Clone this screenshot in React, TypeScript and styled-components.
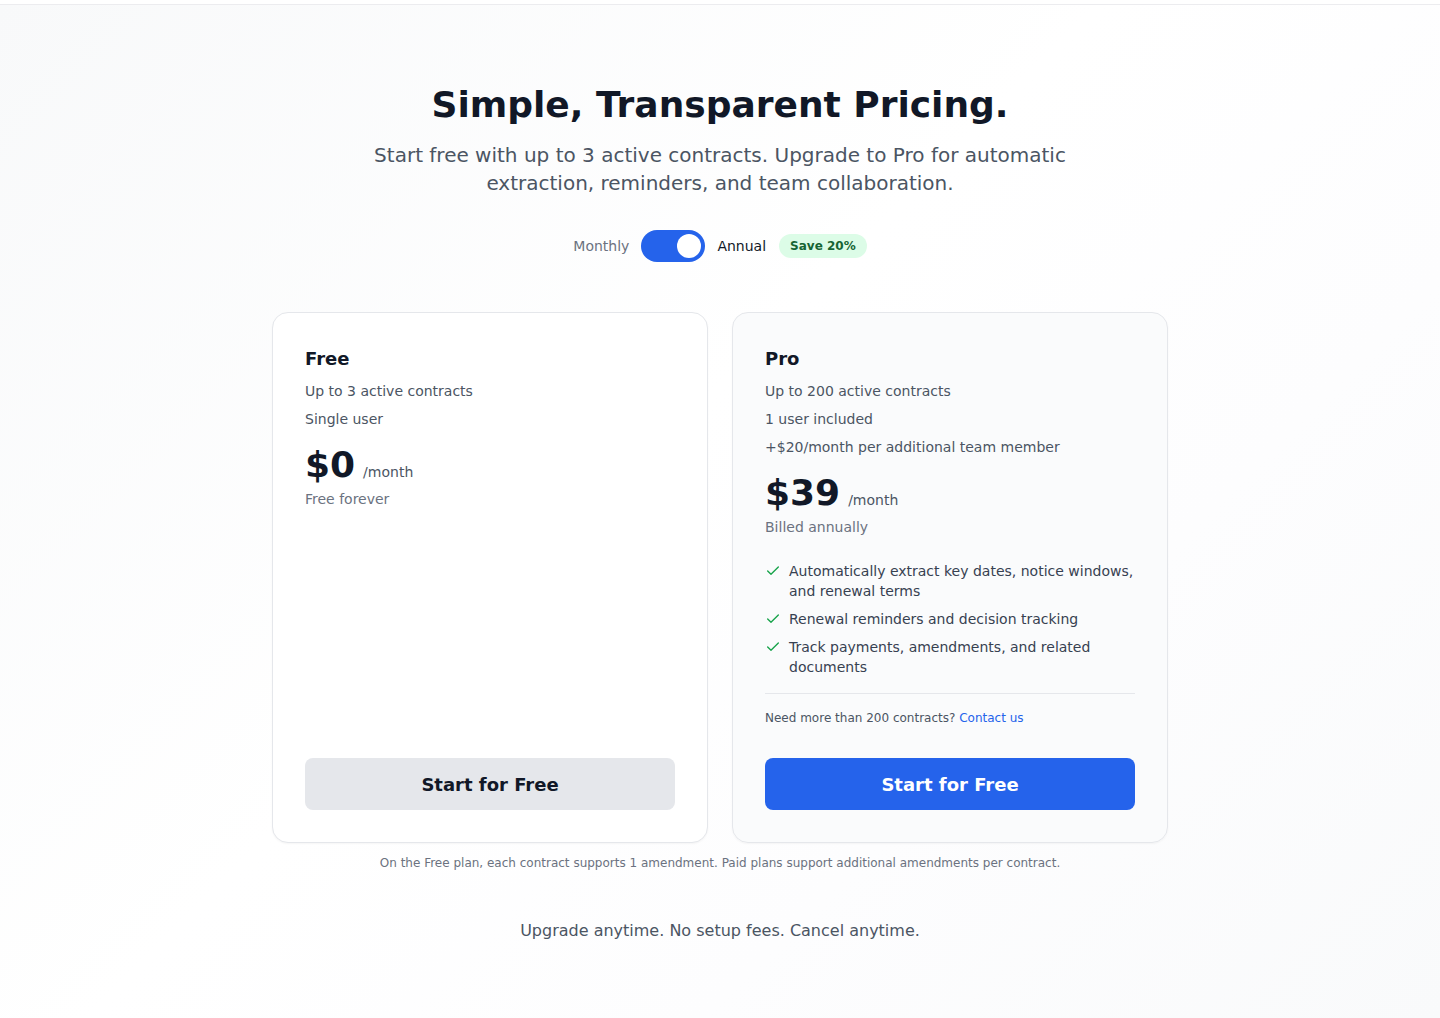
import React, { useState } from 'react';
import styled, { createGlobalStyle } from 'styled-components';

const GlobalStyle = createGlobalStyle`
  * { box-sizing: border-box; }
  html, body {
    margin: 0;
    padding: 0;
    font-family: "DejaVu Sans", "Noto Sans", sans-serif;
    color: #111827;
  }
`;

const Page = styled.div`
  min-height: 1018px;
  background: linear-gradient(135deg, #f8f9fa 0%, #ffffff 45%, #fdfdfe 70%, #f9fafb 100%);
`;

const TopBar = styled.div`
  height: 5px;
  background: #ffffff;
  border-bottom: 1px solid #ececef;
`;

const Main = styled.main`
  max-width: 896px;
  margin: 0 auto;
  padding: 80px 0 60px;
  display: flex;
  flex-direction: column;
  align-items: center;
`;

const Title = styled.h1`
  margin: 0;
  font-size: 36px;
  line-height: 40px;
  font-weight: 700;
  color: #111827;
  text-align: center;
`;

const Subtitle = styled.p`
  margin: 16px 0 0;
  max-width: 700px;
  font-size: 20px;
  line-height: 28px;
  color: #4b5563;
  text-align: center;
`;

const ToggleRow = styled.div`
  margin-top: 33px;
  display: flex;
  align-items: center;
  gap: 12px;
`;

const ToggleLabel = styled.span<{ $active?: boolean }>`
  font-size: 14px;
  line-height: 20px;
  color: ${(p) => (p.$active ? '#111827' : '#6b7280')};
`;

const Switch = styled.button<{ $on: boolean }>`
  position: relative;
  width: 64px;
  height: 32px;
  border: none;
  border-radius: 999px;
  padding: 0;
  cursor: pointer;
  background: ${(p) => (p.$on ? '#2563eb' : '#d1d5db')};
`;

const Knob = styled.span<{ $on: boolean }>`
  position: absolute;
  top: 4px;
  left: ${(p) => (p.$on ? '36px' : '4px')};
  width: 24px;
  height: 24px;
  border-radius: 50%;
  background: #ffffff;
  transition: left 0.2s;
`;

const Badge = styled.span`
  margin-left: 1px;
  padding: 4px 11px;
  border-radius: 999px;
  background: #dcfce7;
  color: #166534;
  font-size: 12px;
  line-height: 16px;
  font-weight: 700;
`;

const Cards = styled.div`
  margin-top: 50px;
  width: 100%;
  display: grid;
  grid-template-columns: 1fr 1fr;
  gap: 24px;
`;

const Card = styled.div<{ $tint?: boolean }>`
  display: flex;
  flex-direction: column;
  min-height: 531px;
  padding: 32px;
  border: 1px solid #e5e7eb;
  border-radius: 16px;
  background: ${(p) => (p.$tint ? 'rgba(250, 251, 252, 0.9)' : '#ffffff')};
  box-shadow: 0 1px 2px rgba(0, 0, 0, 0.04);
`;

const PlanName = styled.h2`
  margin: 0;
  font-size: 18px;
  line-height: 28px;
  font-weight: 700;
  color: #111827;
`;

const PlanLine = styled.p`
  margin: 8px 0 0;
  font-size: 14px;
  line-height: 20px;
  color: #4b5563;
`;

const PriceRow = styled.div`
  margin-top: 16px;
  display: flex;
  align-items: baseline;
  gap: 8px;
`;

const Price = styled.span`
  font-size: 36px;
  line-height: 40px;
  font-weight: 700;
  color: #111827;
`;

const Per = styled.span`
  font-size: 14px;
  color: #4b5563;
`;

const PriceNote = styled.p`
  margin: 4px 0 0;
  font-size: 14px;
  line-height: 20px;
  color: #6b7280;
`;

const Features = styled.ul`
  list-style: none;
  margin: 24px 0 0;
  padding: 0;
  display: flex;
  flex-direction: column;
  gap: 8px;
`;

const Feature = styled.li`
  display: flex;
  gap: 8px;
  font-size: 14px;
  line-height: 20px;
  color: #374151;
  svg {
    flex-shrink: 0;
    margin-top: 2px;
  }
`;

const MoreNote = styled.p`
  margin: 16px 0 0;
  padding-top: 16px;
  border-top: 1px solid #e5e7eb;
  font-size: 12px;
  line-height: 16px;
  color: #4b5563;
`;

const Link = styled.a`
  color: #2563eb;
  text-decoration: none;
`;

const CtaButton = styled.button<{ $primary?: boolean }>`
  margin-top: auto;
  width: 100%;
  height: 52px;
  border: none;
  border-radius: 8px;
  font-family: inherit;
  font-size: 18px;
  font-weight: 700;
  cursor: pointer;
  background: ${(p) => (p.$primary ? '#2563eb' : '#e5e7eb')};
  color: ${(p) => (p.$primary ? '#ffffff' : '#111827')};
`;

const Footnote = styled.p`
  margin: 12px 0 0;
  font-size: 12px;
  line-height: 16px;
  color: #6b7280;
  text-align: center;
`;

const Closing = styled.p`
  margin: 48px 0 0;
  font-size: 16px;
  line-height: 24px;
  color: #4b5563;
  text-align: center;
`;

const Check = () => (
  <svg width="16" height="16" viewBox="0 0 24 24" fill="none" stroke="#16a34a" strokeWidth="2" strokeLinecap="round" strokeLinejoin="round">
    <path d="M20 6 9 17l-5-5" />
  </svg>
);

const features = [
  'Automatically extract key dates, notice windows, and renewal terms',
  'Renewal reminders and decision tracking',
  'Track payments, amendments, and related documents',
];

const App: React.FC = () => {
  const [annual, setAnnual] = useState(true);

  return (
    <>
      <GlobalStyle />
      <Page>
        <TopBar />
        <Main>
          <Title>Simple, Transparent Pricing.</Title>
          <Subtitle>
            Start free with up to 3 active contracts. Upgrade to Pro for automatic extraction, reminders, and team collaboration.
          </Subtitle>

          <ToggleRow>
            <ToggleLabel $active={!annual}>Monthly</ToggleLabel>
            <Switch $on={annual} onClick={() => setAnnual(!annual)} aria-label="Toggle billing">
              <Knob $on={annual} />
            </Switch>
            <ToggleLabel $active={annual}>Annual</ToggleLabel>
            <Badge>Save 20%</Badge>
          </ToggleRow>

          <Cards>
            <Card>
              <PlanName>Free</PlanName>
              <PlanLine>Up to 3 active contracts</PlanLine>
              <PlanLine>Single user</PlanLine>
              <PriceRow>
                <Price>$0</Price>
                <Per>/month</Per>
              </PriceRow>
              <PriceNote>Free forever</PriceNote>
              <CtaButton>Start for Free</CtaButton>
            </Card>

            <Card $tint>
              <PlanName>Pro</PlanName>
              <PlanLine>Up to 200 active contracts</PlanLine>
              <PlanLine>1 user included</PlanLine>
              <PlanLine>+$20/month per additional team member</PlanLine>
              <PriceRow>
                <Price>{annual ? '$39' : '$49'}</Price>
                <Per>/month</Per>
              </PriceRow>
              <PriceNote>{annual ? 'Billed annually' : 'Billed monthly'}</PriceNote>
              <Features>
                {features.map((f) => (
                  <Feature key={f}>
                    <Check />
                    <span>{f}</span>
                  </Feature>
                ))}
              </Features>
              <MoreNote>
                Need more than 200 contracts? <Link href="#">Contact us</Link>
              </MoreNote>
              <CtaButton $primary style={{ marginTop: 32 }}>Start for Free</CtaButton>
            </Card>
          </Cards>

          <Footnote>
            On the Free plan, each contract supports 1 amendment. Paid plans support additional amendments per contract.
          </Footnote>
          <Closing>Upgrade anytime. No setup fees. Cancel anytime.</Closing>
        </Main>
      </Page>
    </>
  );
};

export default App;
